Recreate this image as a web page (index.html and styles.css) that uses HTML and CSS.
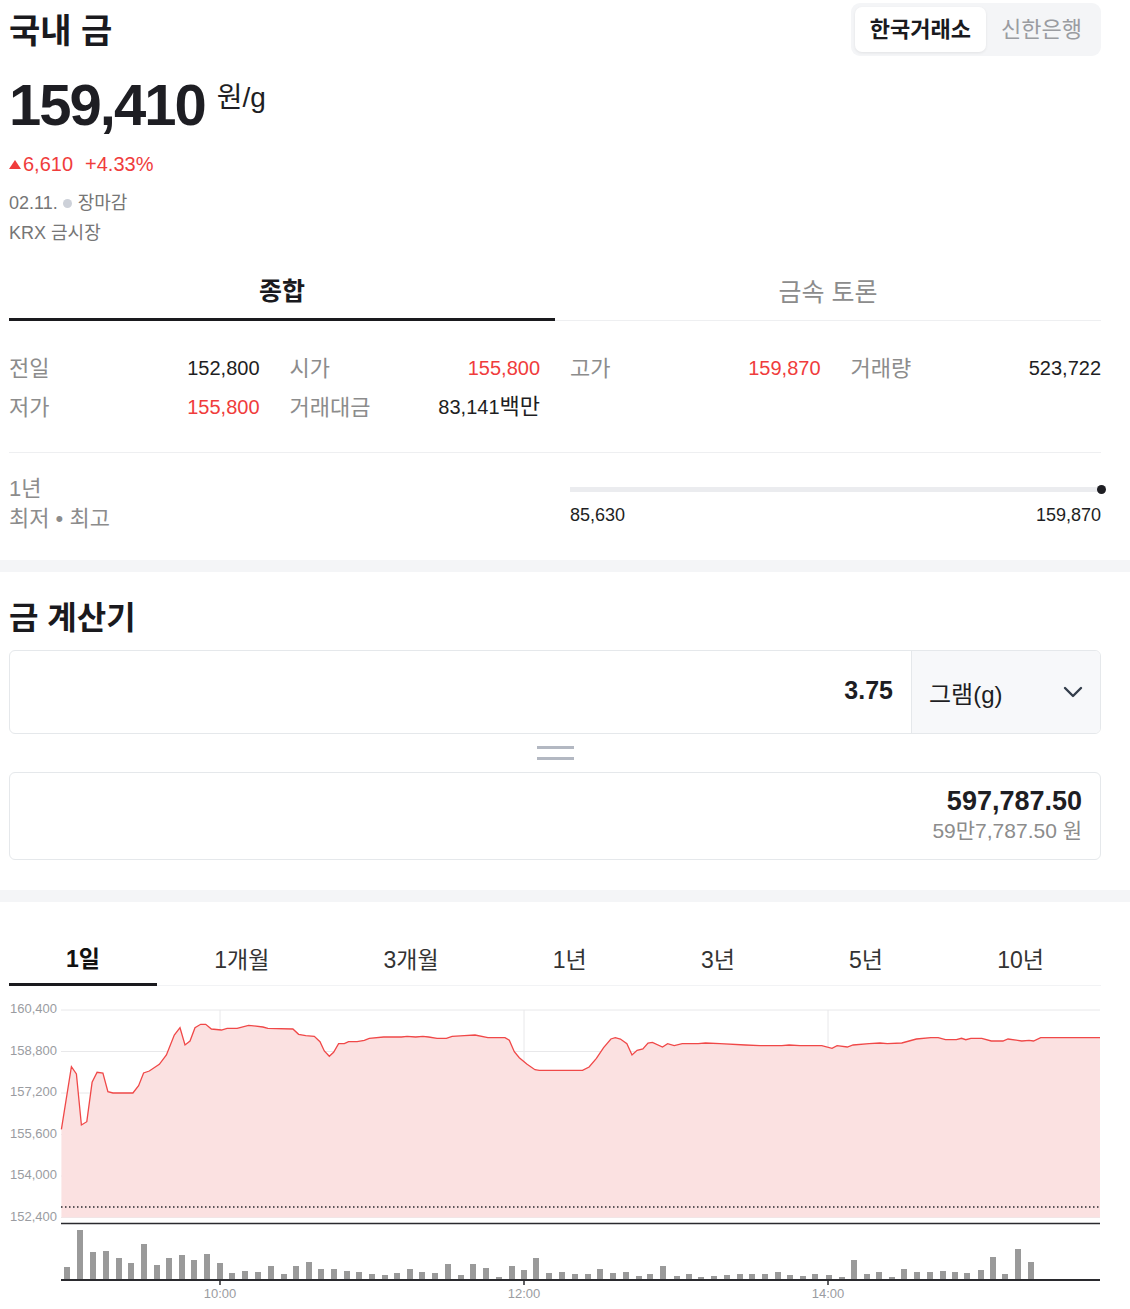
FILE: index.html
```html
<!DOCTYPE html>
<html lang="ko">
<head>
    <meta charset="UTF-8">
    <meta name="viewport" content="width=device-width, initial-scale=1.0">
    <title>국내 금</title>
    <link rel="stylesheet" href="styles.css">
</head>
<body>
    <!-- 시세 요약 -->
    <section class="page">
        <div class="header">
            <h1 class="title">국내 금</h1>
            <div class="segment">
                <span class="segment-item active">한국거래소</span>
                <span class="segment-item">신한은행</span>
            </div>
        </div>

        <div class="price-row">
            <span class="price">159,410</span>
            <span class="unit">원/g</span>
        </div>

        <div class="change">
            <span class="arrow-up"></span>6,610<span class="rate">+4.33%</span>
        </div>

        <div class="meta meta-date">02.11. <span class="dot"></span> 장마감</div>
        <div class="meta">KRX 금시장</div>

        <div class="tabs">
            <div class="tab active">종합</div>
            <div class="tab">금속 토론</div>
        </div>

        <div class="stats">
            <div class="stat"><span class="label">전일</span><span class="value">152,800</span></div>
            <div class="stat"><span class="label">시가</span><span class="value up">155,800</span></div>
            <div class="stat"><span class="label">고가</span><span class="value up">159,870</span></div>
            <div class="stat"><span class="label">거래량</span><span class="value">523,722</span></div>
            <div class="stat"><span class="label">저가</span><span class="value up">155,800</span></div>
            <div class="stat"><span class="label">거래대금</span><span class="value">83,141<span class="value-ko">백만</span></span></div>
        </div>

        <div class="range">
            <div class="range-label">
                <div>1년</div>
                <div>최저 • 최고</div>
            </div>
            <div class="range-bar">
                <div class="track"><span class="knob"></span></div>
                <div class="range-values">
                    <span>85,630</span>
                    <span>159,870</span>
                </div>
            </div>
        </div>
    </section>

    <div class="band"></div>

    <!-- 금 계산기 -->
    <section class="page">
        <h2 class="calc-title">금 계산기</h2>
        <div class="calc-input">
            <div class="amount">3.75</div>
            <div class="unit-select">
                <span>그램(g)</span>
                <svg width="20" height="12" viewBox="0 0 20 12">
                    <polyline points="2,2 10,10 18,2" fill="none" stroke="#333d4b" stroke-width="2.4" stroke-linecap="round" stroke-linejoin="round"/>
                </svg>
            </div>
        </div>
        <div class="equals">
            <span></span>
            <span></span>
        </div>
        <div class="calc-result">
            <div class="total">597,787.50</div>
            <div class="total-ko">59만7,787.50 원</div>
        </div>
    </section>

    <div class="band band-low"></div>

    <!-- 차트 -->
    <section class="page">
        <div class="periods">
            <div class="period active">1일</div>
            <div class="period">1개월</div>
            <div class="period">3개월</div>
            <div class="period">1년</div>
            <div class="period">3년</div>
            <div class="period">5년</div>
            <div class="period">10년</div>
        </div>

        <svg class="chart" width="1092" height="310" viewBox="9 995 1092 310">
            <g class="grid">
                <line x1="61" y1="1010" x2="1100" y2="1010"/>
                <line x1="61" y1="1051.5" x2="1100" y2="1051.5"/>
                <line x1="61" y1="1093" x2="1100" y2="1093"/>
                <line x1="61" y1="1134.5" x2="1100" y2="1134.5"/>
                <line x1="61" y1="1176" x2="1100" y2="1176"/>
                <line x1="61" y1="1217.5" x2="1100" y2="1217.5"/>
                <line x1="220" y1="1010" x2="220" y2="1217.5"/>
                <line x1="524" y1="1010" x2="524" y2="1217.5"/>
                <line x1="828" y1="1010" x2="828" y2="1217.5"/>
            </g>
            <g class="axis-y">
                <text x="57" y="1010">160,400</text>
                <text x="57" y="1051.5">158,800</text>
                <text x="57" y="1093">157,200</text>
                <text x="57" y="1134.5">155,600</text>
                <text x="57" y="1176">154,000</text>
                <text x="57" y="1217.5">152,400</text>
            </g>
            <polygon class="area" points="61.4,1129.3 71.4,1066.7 76.4,1074 81.4,1125 86.8,1121.7 92.1,1082.3 97.1,1072.3 102.9,1073 107.9,1091.7 112.9,1093 132.9,1093 138.6,1085.7 143.6,1073 149.3,1071 159.3,1064.3 166.4,1055 174.3,1035 180,1027.7 185,1045 190,1041 195,1027.7 200.7,1024.3 205.7,1024.3 211.4,1029 221.4,1030 227.1,1028.3 237.1,1028.3 248.6,1025.3 262.9,1027 267.9,1028.3 292.9,1029 298.6,1034.3 305.7,1035.7 314.3,1036.3 320,1041.7 324.3,1051 329.3,1056.3 333.6,1052.3 338.6,1043.7 344.3,1043.7 348.6,1041.7 357.1,1041.7 364.3,1040.3 369.3,1038.3 383.6,1037 401.4,1037 407.1,1036.3 415.7,1037 422.9,1036.3 428.6,1037 437.1,1038.3 446.4,1038.3 452.1,1036.3 464.3,1035.7 475,1035 487.9,1037.7 505,1037.7 509.3,1040.3 514.3,1051.7 519.3,1057.7 527.1,1064.3 535,1069.7 539.3,1070.3 582.5,1070.3 589.1,1067 596.4,1058.3 603.6,1047.7 610.9,1039 615.3,1037.7 620.4,1039 626.9,1043.7 632,1055 637.1,1050.3 642.9,1049 648,1043 652.4,1042.3 662.5,1047 667.6,1043.7 674.2,1045.7 682.2,1043.7 698.2,1043.7 705.5,1043 720,1043.7 745.5,1045 760,1045.7 781.8,1045.7 789.1,1045 800,1045.7 821.8,1045.7 832,1048.3 837.1,1045.7 847.3,1047 853.1,1045 869.1,1043.7 880,1043 887.3,1043.7 901.8,1043 916.4,1039 930.9,1037.7 938.2,1037.7 945.5,1039.7 956.4,1039.7 961.5,1038.3 965.8,1039.7 970.9,1038.3 981.8,1038.3 991.3,1041 1002.9,1041 1008,1039 1021.8,1041 1029.1,1040.3 1033.5,1041 1040.7,1037.7 1100,1037.7 1100,1217.5 61.4,1217.5"/>
            <polyline class="line" points="61.4,1129.3 71.4,1066.7 76.4,1074 81.4,1125 86.8,1121.7 92.1,1082.3 97.1,1072.3 102.9,1073 107.9,1091.7 112.9,1093 132.9,1093 138.6,1085.7 143.6,1073 149.3,1071 159.3,1064.3 166.4,1055 174.3,1035 180,1027.7 185,1045 190,1041 195,1027.7 200.7,1024.3 205.7,1024.3 211.4,1029 221.4,1030 227.1,1028.3 237.1,1028.3 248.6,1025.3 262.9,1027 267.9,1028.3 292.9,1029 298.6,1034.3 305.7,1035.7 314.3,1036.3 320,1041.7 324.3,1051 329.3,1056.3 333.6,1052.3 338.6,1043.7 344.3,1043.7 348.6,1041.7 357.1,1041.7 364.3,1040.3 369.3,1038.3 383.6,1037 401.4,1037 407.1,1036.3 415.7,1037 422.9,1036.3 428.6,1037 437.1,1038.3 446.4,1038.3 452.1,1036.3 464.3,1035.7 475,1035 487.9,1037.7 505,1037.7 509.3,1040.3 514.3,1051.7 519.3,1057.7 527.1,1064.3 535,1069.7 539.3,1070.3 582.5,1070.3 589.1,1067 596.4,1058.3 603.6,1047.7 610.9,1039 615.3,1037.7 620.4,1039 626.9,1043.7 632,1055 637.1,1050.3 642.9,1049 648,1043 652.4,1042.3 662.5,1047 667.6,1043.7 674.2,1045.7 682.2,1043.7 698.2,1043.7 705.5,1043 720,1043.7 745.5,1045 760,1045.7 781.8,1045.7 789.1,1045 800,1045.7 821.8,1045.7 832,1048.3 837.1,1045.7 847.3,1047 853.1,1045 869.1,1043.7 880,1043 887.3,1043.7 901.8,1043 916.4,1039 930.9,1037.7 938.2,1037.7 945.5,1039.7 956.4,1039.7 961.5,1038.3 965.8,1039.7 970.9,1038.3 981.8,1038.3 991.3,1041 1002.9,1041 1008,1039 1021.8,1041 1029.1,1040.3 1033.5,1041 1040.7,1037.7 1100,1037.7"/>
            <!-- 전일 종가 -->
            <line class="prev-close" x1="61" y1="1207" x2="1100" y2="1207"/>
            <line class="axis" x1="61" y1="1223.5" x2="1100" y2="1223.5"/>

            <!-- 거래량 -->
            <g class="bars">
                <rect x="64" y="1267" width="6" height="12"/>
                <rect x="77" y="1230" width="6" height="49"/>
                <rect x="90" y="1252" width="6" height="27"/>
                <rect x="103" y="1251" width="6" height="28"/>
                <rect x="116" y="1258" width="6" height="21"/>
                <rect x="128" y="1263" width="6" height="16"/>
                <rect x="141" y="1244" width="6" height="35"/>
                <rect x="154" y="1265" width="6" height="14"/>
                <rect x="166" y="1258" width="6" height="21"/>
                <rect x="179" y="1255" width="6" height="24"/>
                <rect x="191" y="1260" width="6" height="19"/>
                <rect x="204" y="1254" width="6" height="25"/>
                <rect x="217" y="1263" width="6" height="16"/>
                <rect x="229" y="1273" width="6" height="6"/>
                <rect x="242" y="1271" width="6" height="8"/>
                <rect x="255" y="1272" width="6" height="7"/>
                <rect x="268" y="1266" width="6" height="13"/>
                <rect x="281" y="1274" width="6" height="5"/>
                <rect x="293" y="1266" width="6" height="13"/>
                <rect x="306" y="1262" width="6" height="17"/>
                <rect x="318" y="1269" width="6" height="10"/>
                <rect x="331" y="1269" width="6" height="10"/>
                <rect x="344" y="1271" width="6" height="8"/>
                <rect x="356" y="1272" width="6" height="7"/>
                <rect x="369" y="1274" width="6" height="5"/>
                <rect x="382" y="1275" width="6" height="4"/>
                <rect x="394" y="1273" width="6" height="6"/>
                <rect x="407" y="1269" width="6" height="10"/>
                <rect x="419" y="1272" width="6" height="7"/>
                <rect x="432" y="1273" width="6" height="6"/>
                <rect x="445" y="1264" width="6" height="15"/>
                <rect x="458" y="1275" width="6" height="4"/>
                <rect x="470" y="1264" width="6" height="15"/>
                <rect x="483" y="1268" width="6" height="11"/>
                <rect x="496" y="1277" width="6" height="2"/>
                <rect x="509" y="1266" width="6" height="13"/>
                <rect x="521" y="1270" width="6" height="9"/>
                <rect x="533" y="1258" width="6" height="21"/>
                <rect x="546" y="1273" width="6" height="6"/>
                <rect x="559" y="1272" width="6" height="7"/>
                <rect x="572" y="1274" width="6" height="5"/>
                <rect x="585" y="1274" width="6" height="5"/>
                <rect x="597" y="1269" width="6" height="10"/>
                <rect x="610" y="1273" width="6" height="6"/>
                <rect x="623" y="1272" width="6" height="7"/>
                <rect x="636" y="1276" width="6" height="3"/>
                <rect x="647" y="1274" width="6" height="5"/>
                <rect x="660" y="1266" width="6" height="13"/>
                <rect x="674" y="1276" width="6" height="3"/>
                <rect x="686" y="1274" width="6" height="5"/>
                <rect x="698" y="1277" width="6" height="2"/>
                <rect x="711" y="1276" width="6" height="3"/>
                <rect x="724" y="1275" width="6" height="4"/>
                <rect x="737" y="1274" width="6" height="5"/>
                <rect x="749" y="1274" width="6" height="5"/>
                <rect x="762" y="1274" width="6" height="5"/>
                <rect x="775" y="1272" width="6" height="7"/>
                <rect x="787" y="1275" width="6" height="4"/>
                <rect x="800" y="1276" width="6" height="3"/>
                <rect x="812" y="1274" width="6" height="5"/>
                <rect x="826" y="1275" width="6" height="4"/>
                <rect x="839" y="1277" width="6" height="2"/>
                <rect x="851" y="1260" width="6" height="19"/>
                <rect x="864" y="1274" width="6" height="5"/>
                <rect x="876" y="1272" width="6" height="7"/>
                <rect x="889" y="1277" width="6" height="2"/>
                <rect x="901" y="1269" width="6" height="10"/>
                <rect x="914" y="1272" width="6" height="7"/>
                <rect x="927" y="1272" width="6" height="7"/>
                <rect x="940" y="1271" width="6" height="8"/>
                <rect x="952" y="1272" width="6" height="7"/>
                <rect x="964" y="1273" width="6" height="6"/>
                <rect x="978" y="1270" width="6" height="9"/>
                <rect x="990" y="1257" width="6" height="22"/>
                <rect x="1002" y="1274" width="6" height="5"/>
                <rect x="1015" y="1249" width="6" height="30"/>
                <rect x="1028" y="1262" width="6" height="17"/>
            </g>
            <line class="axis base" x1="61" y1="1280" x2="1100" y2="1280"/>
            <g class="ticks">
                <line x1="220" y1="1280" x2="220" y2="1285"/>
                <line x1="524" y1="1280" x2="524" y2="1285"/>
                <line x1="828" y1="1280" x2="828" y2="1285"/>
            </g>
            <g class="axis-x">
                <text x="220" y="1295">10:00</text>
                <text x="524" y="1295">12:00</text>
                <text x="828" y="1295">14:00</text>
            </g>
        </svg>
    </section>
</body>
</html>
```

FILE: styles.css
```css
body {
    margin: 0;
    font-family: "Liberation Sans", "Noto Sans CJK KR", sans-serif;
    color: #1e1e23;
    background-color: #ffffff;
}

.page {
    padding: 0 29px 0 9px;
}

/* 상단 */
.header {
    display: flex;
    justify-content: space-between;
    align-items: flex-start;
    height: 60px;
}

.title {
    margin: 0;
    padding-top: 11px;
    font-size: 34px;
    line-height: 40px;
    font-weight: 700;
    color: #1a1a1e;
}

.segment {
    display: flex;
    margin-top: 3px;
    padding: 4px;
    background-color: #f4f5f7;
    border-radius: 9px;
}

.segment-item {
    padding: 0 15px;
    font-size: 22px;
    line-height: 45px;
    color: #9a9ca1;
}

.segment-item.active {
    background-color: #ffffff;
    border-radius: 7px;
    box-shadow: 0 1px 3px rgba(0, 0, 0, 0.08);
    font-weight: 700;
    color: #1a1a1e;
}

.price-row {
    display: flex;
    align-items: flex-start;
    margin-top: 16px;
}

.price {
    font-size: 58px;
    line-height: 58px;
    font-weight: 700;
    letter-spacing: -2px;
}

.unit {
    margin: 7px 0 0 12px;
    font-size: 28px;
    line-height: 30px;
}

.change {
    margin-top: 18px;
    font-size: 20px;
    line-height: 24px;
    color: #f03c3c;
}

.arrow-up {
    display: inline-block;
    margin: 0 2px 2px 0;
    border-left: 6px solid transparent;
    border-right: 6px solid transparent;
    border-bottom: 9px solid #f03c3c;
}

.rate {
    margin-left: 12px;
}

.meta {
    font-size: 18px;
    line-height: 30px;
    color: #767676;
}

.meta-date {
    margin-top: 12px;
}

.dot {
    display: inline-block;
    width: 9px;
    height: 9px;
    margin: 0 1px 1px 0;
    border-radius: 50%;
    background-color: #cdd1d9;
}

/* 탭 */
.tabs {
    display: flex;
    margin-top: 14px;
}

.tab {
    flex: 1;
    display: flex;
    justify-content: center;
    align-items: center;
    box-sizing: border-box;
    height: 59px;
    padding-bottom: 2px;
    font-size: 25px;
    color: #8c8c8c;
    border-bottom: 1px solid #eeeff1;
}

.tab.active {
    font-weight: 700;
    color: #1a1a1e;
    border-bottom: 3px solid #1a1a1e;
}

/* 시세 표 */
.stats {
    display: grid;
    grid-template-columns: repeat(4, 1fr);
    grid-auto-rows: 39px;
    column-gap: 30px;
    padding: 28px 0 25px;
    border-bottom: 1px solid #eeeff1;
}

.stat {
    display: flex;
    justify-content: space-between;
    align-items: center;
    font-size: 20px;
    line-height: 39px;
}

.label {
    font-size: 22px;
    color: #8c8c8c;
}

.value {
    color: #1e1e23;
}

.value.up {
    color: #f03c3c;
}

.value-ko {
    font-size: 22px;
    line-height: 1;
}

.range {
    display: grid;
    grid-template-columns: repeat(4, 1fr);
    column-gap: 30px;
    padding: 21px 0 26px;
}

.range-label {
    grid-column: span 2;
    font-size: 22px;
    line-height: 30px;
    color: #8c8c8c;
}

.range-bar {
    grid-column: span 2;
    padding-top: 13px;
}

.track {
    position: relative;
    height: 5px;
    background-color: #ebecef;
}

.knob {
    position: absolute;
    right: -5px;
    top: -2px;
    width: 9px;
    height: 9px;
    border-radius: 50%;
    background-color: #1e1e23;
}

.range-values {
    display: flex;
    justify-content: space-between;
    margin-top: 11px;
    font-size: 18px;
    line-height: 24px;
}

.band {
    height: 12px;
    background-color: #f4f5f7;
}

.band-low {
    margin-top: 30px;
}

/* 계산기 */
.calc-title {
    margin: 26px 0 0;
    font-size: 32px;
    line-height: 40px;
    font-weight: 700;
    color: #1a1a1e;
}

.calc-input {
    display: flex;
    margin-top: 12px;
    height: 84px;
    box-sizing: border-box;
    border: 1px solid #e5e8eb;
    border-radius: 6px;
    overflow: hidden;
}

.amount {
    flex: 1;
    display: flex;
    justify-content: flex-end;
    align-items: center;
    padding: 0 18px 3px 0;
    font-size: 25px;
    font-weight: 700;
}

.unit-select {
    display: flex;
    justify-content: space-between;
    align-items: center;
    width: 189px;
    box-sizing: border-box;
    padding: 0 17px 0 17px;
    background-color: #f7f8fa;
    border-left: 1px solid #e5e8eb;
    font-size: 24px;
    color: #1e1e23;
}

.equals {
    display: flex;
    flex-direction: column;
    align-items: center;
    justify-content: center;
    gap: 8px;
    height: 38px;
}

.equals span {
    width: 37px;
    height: 3px;
    background-color: #b3b8c2;
}

.calc-result {
    box-sizing: border-box;
    height: 88px;
    padding: 12px 18px 0;
    border: 1px solid #e5e8eb;
    border-radius: 6px;
    text-align: right;
}

.total {
    font-size: 27px;
    line-height: 32px;
    font-weight: 700;
}

.total-ko {
    font-size: 21px;
    line-height: 28px;
    color: #8c8c8c;
}

/* 기간 탭 */
.periods {
    display: flex;
    margin-top: 33px;
}

.period {
    flex: 1 1 auto;
    display: flex;
    justify-content: center;
    align-items: center;
    box-sizing: border-box;
    height: 51px;
    padding-bottom: 4px;
    font-size: 23px;
    color: #333333;
    border-bottom: 1px solid #f2f3f5;
}

.period.active {
    font-weight: 700;
    color: #111111;
    border-bottom: 3px solid #1a1a1e;
}

/* 차트 */
.chart {
    display: block;
    margin-top: 9px;
}

.grid line {
    stroke: #e8e8ea;
    stroke-width: 1;
}

.axis-y text {
    font-family: "Liberation Sans", sans-serif;
    font-size: 13px;
    fill: #9a9ca1;
    text-anchor: end;
    dominant-baseline: middle;
}

.axis-x text {
    font-family: "Liberation Sans", sans-serif;
    font-size: 13px;
    fill: #9a9ca1;
    text-anchor: middle;
    dominant-baseline: middle;
}

.area {
    fill: #fbe1e1;
}

.line {
    fill: none;
    stroke: #f04848;
    stroke-width: 1.3;
}

.prev-close {
    stroke: #2a2a2e;
    stroke-width: 1.5;
    stroke-dasharray: 1.5 2.5;
}

.axis {
    stroke: #2a2a2e;
    stroke-width: 1.5;
}

.axis.base {
    stroke-width: 2;
}

.bars rect {
    fill: #9a9a9a;
}

.ticks line {
    stroke: #2a2a2e;
    stroke-width: 1.5;
}
```
